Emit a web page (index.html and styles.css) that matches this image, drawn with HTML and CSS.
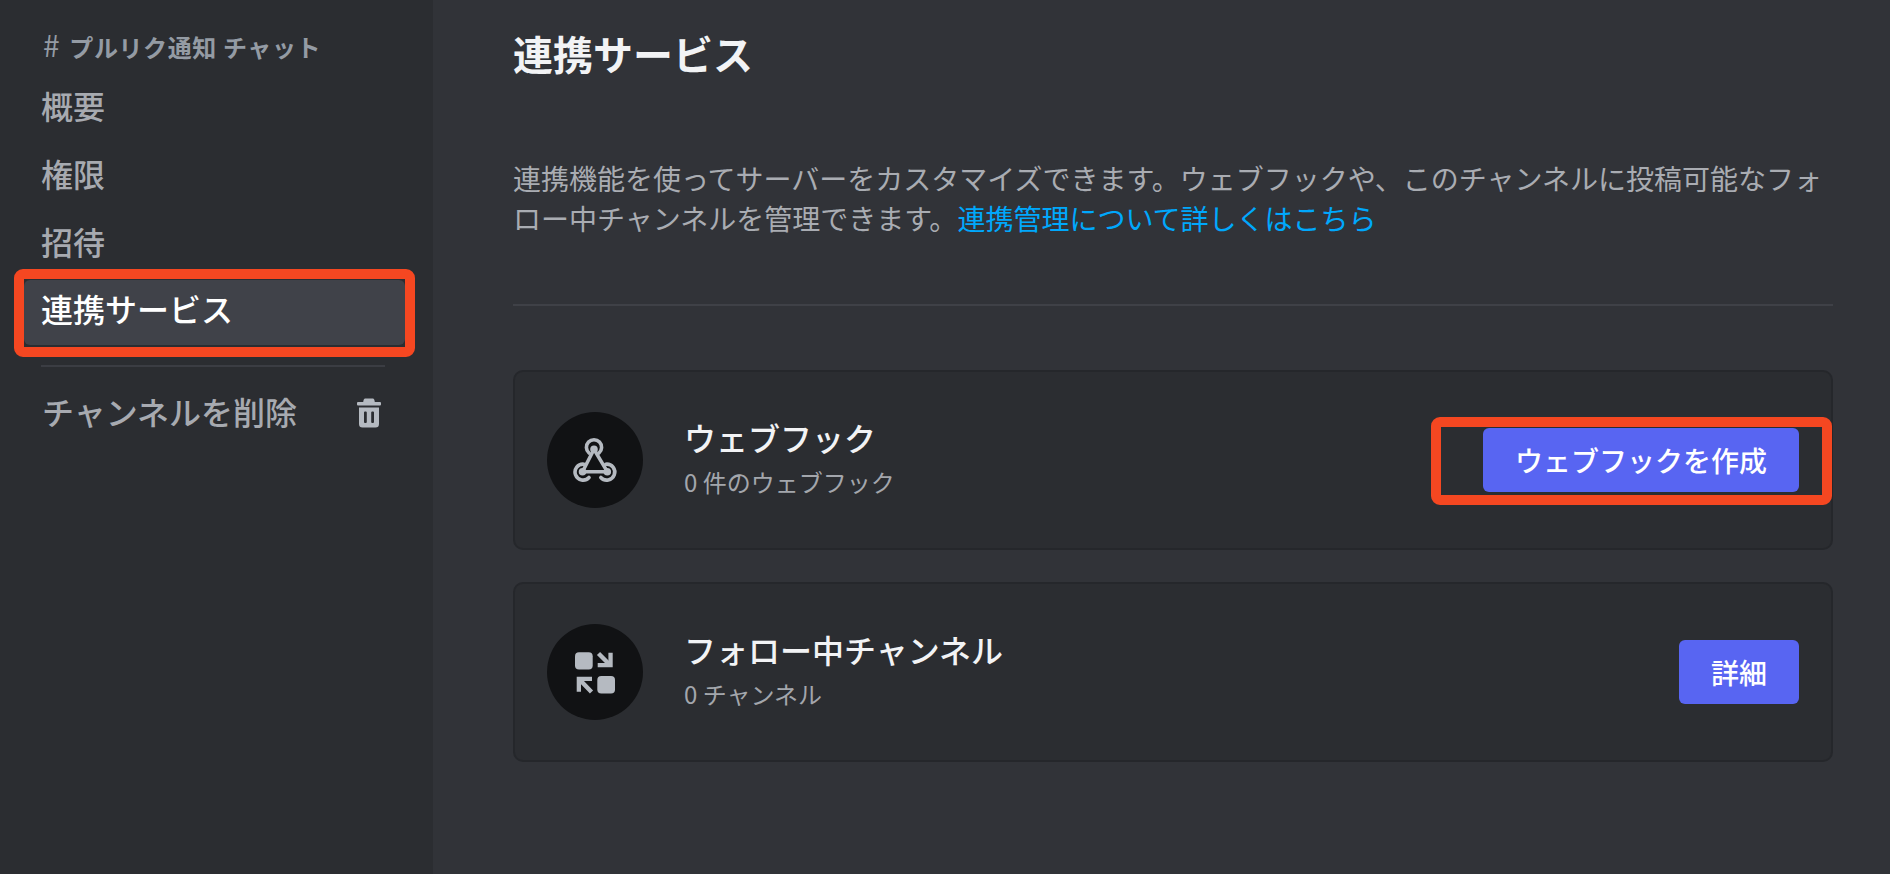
FILE: index.html
```html
<!DOCTYPE html>
<html lang="ja">
<head>
    <meta charset="UTF-8">
    <title>連携サービス</title>
    <link rel="stylesheet" href="styles.css">
</head>
<body>
    <div class="layout">
        <nav class="sidebar">
            <div class="sidebar-header"><span class="hash">#</span> プルリク通知 チャット</div>
            <div class="nav-item">概要</div>
            <div class="nav-item">権限</div>
            <div class="nav-item">招待</div>
            <div class="nav-item selected">連携サービス<span class="callout"></span></div>
            <div class="nav-separator"></div>
            <div class="nav-item delete-item">
                チャンネルを削除
                <svg class="trash-icon" width="24" height="30" viewBox="0 0 24 30">
                    <path d="M8.5 0.5h7c1 0 1.7 0.7 1.9 1.6L17.8 4H23a1 1 0 0 1 1 1v1.5a1 1 0 0 1-1 1H1a1 1 0 0 1-1-1V5a1 1 0 0 1 1-1h5.2l0.4-1.9C6.8 1.2 7.5 0.5 8.5 0.5z" fill="currentColor"/>
                    <path fill-rule="evenodd" d="M2 9.5h20v16.500a3.500 3.500 0 0 1-3.500 3.500h-13A3.500 3.500 0 0 1 2 26zM8 13.500a1 1 0 0 0-1 1v9.500a1 1 0 0 0 1 1h0.800a1 1 0 0 0 1-1v-9.500a1 1 0 0 0-1-1zM15.200 13.500a1 1 0 0 0-1 1v9.500a1 1 0 0 0 1 1h0.800a1 1 0 0 0 1-1v-9.500a1 1 0 0 0-1-1z" fill="currentColor"/>
                </svg>
            </div>
        </nav>

        <main class="content">
            <h1 class="page-title">連携サービス</h1>
            <p class="description">連携機能を使ってサーバーをカスタマイズできます。ウェブフックや、このチャンネルに投稿可能なフォロー中チャンネルを管理できます。<a class="link" href="#">連携管理について詳しくはこちら</a></p>
            <div class="divider"></div>

            <div class="card">
                <div class="card-icon">
                    <svg width="46" height="46" viewBox="-1 -1 46 46" fill="none" stroke="currentColor" stroke-width="3.6" stroke-linecap="round">
                        <path d="M16 15a7.600 7.600 0 1 1 10 0"/>
                        <path d="M11 26.200a8 8 0 1 0 5 13.300"/>
                        <path d="M32.800 26.200a8 8 0 1 1-5 13.300"/>
                        <path d="M21 11.300L9.500 33.700H34.300L21 11.300" stroke-linejoin="round"/>
                        <circle cx="21" cy="11.300" r="2" fill="currentColor"/>
                        <circle cx="9.500" cy="33.700" r="2" fill="currentColor"/>
                        <circle cx="34.300" cy="33.700" r="2" fill="currentColor"/>
                    </svg>
                </div>
                <div class="card-text">
                    <div class="card-title">ウェブフック</div>
                    <div class="card-sub">0 件のウェブフック</div>
                </div>
                <button class="btn">ウェブフックを作成</button>
                <span class="callout callout-btn"></span>
            </div>

            <div class="card">
                <div class="card-icon">
                    <svg width="44" height="44" viewBox="0 0 44 44" fill="currentColor">
                        <rect x="2" y="2.300" width="17.700" height="17.200" rx="4"/>
                        <rect x="24.300" y="26" width="17.700" height="17.500" rx="4"/>
                        <path d="M39.700 2.700V17.300H24.700V13H35.400V2.700Z"/>
                        <path d="M3.700 41.700V26.700H19V31H8V41.700Z"/>
                        <path d="M25.500 3.500L36 14M18.500 42L7 30" stroke="currentColor" stroke-width="4.400"/>
                    </svg>
                </div>
                <div class="card-text">
                    <div class="card-title">フォロー中チャンネル</div>
                    <div class="card-sub">0 チャンネル</div>
                </div>
                <button class="btn">詳細</button>
            </div>
        </main>
    </div>
</body>
</html>
```

FILE: styles.css
```css
* {
    margin: 0;
    padding: 0;
    box-sizing: border-box;
}

html,
body {
    height: 100%;
    overflow: hidden;
}

body {
    background-color: #313338;
    font-family: "Noto Sans CJK JP", "Noto Sans", sans-serif;
    color: #fff;
}

.layout {
    display: flex;
    height: 100%;
}

/* サイドバー */
.sidebar {
    flex: 0 0 433px;
    background-color: #2b2d31;
    padding: 29px 28px 0 24px;
}

.sidebar-header {
    height: 30px;
    margin-bottom: 16px;
    padding-left: 19px;
    font-size: 24px;
    font-weight: 700;
    line-height: 30px;
    letter-spacing: 0.6px;
    white-space: nowrap;
    color: #949ba4;
}

.hash {
    margin-right: 3px;
    font-size: 30px;
    font-weight: 400;
    line-height: 1;
}

.nav-item {
    position: relative;
    display: flex;
    align-items: center;
    height: 65px;
    margin-bottom: 3px;
    padding: 0 24px 6px 17px;
    font-size: 32px;
    font-weight: 500;
    color: #a7aab0;
}

.nav-item.selected {
    margin-top: 4px;
    margin-bottom: 0;
    padding-bottom: 9px;
    background-color: #404249;
    border-radius: 6px;
    color: #fff;
}

.callout {
    position: absolute;
    border: 10px solid #f54721;
    border-radius: 9px;
}

.selected .callout {
    top: -11px;
    bottom: -12px;
    left: -10px;
    right: -10px;
}

.nav-separator {
    height: 2px;
    margin: 20px 20px 13px 17px;
    background-color: #3b3d43;
}

.nav-item.delete-item {
    justify-content: space-between;
    padding-left: 18px;
    padding-bottom: 4px;
}

.trash-icon {
    color: #b5bac1;
    margin-top: 4px;
}

/* メイン */
.content {
    flex: 1;
    padding: 29px 57px 0 80px;
}

.page-title {
    font-size: 40px;
    font-weight: 700;
    line-height: 48px;
    color: #f2f3f5;
}

.description {
    margin-top: 81px;
    font-size: 28px;
    line-height: 40px;
    color: #a9acb2;
}

.link {
    color: #00a8fc;
    text-decoration: none;
}

.divider {
    height: 2px;
    margin-top: 66px;
    background-color: #3f4147;
}

.card {
    position: relative;
    display: flex;
    align-items: center;
    height: 180px;
    margin-top: 32px;
    padding: 0 32px;
    background-color: #2b2d31;
    border: 2px solid #25272b;
    border-radius: 10px;
}

.divider + .card {
    margin-top: 64px;
}

.card-icon {
    display: flex;
    align-items: center;
    justify-content: center;
    flex: 0 0 96px;
    height: 96px;
    margin-right: 41px;
    background-color: #111214;
    border-radius: 50%;
    color: #b5bac1;
}

.card-text {
    flex: 1;
    padding-bottom: 7px;
}

.card-title {
    margin-bottom: 7px;
    font-size: 32px;
    font-weight: 500;
    line-height: 44px;
    color: #f2f3f5;
}

.card-sub {
    font-size: 24px;
    line-height: 32px;
    color: #a3a6ac;
}

.btn {
    height: 64px;
    padding: 0 32px;
    background-color: #5865f2;
    border: none;
    border-radius: 6px;
    font-family: inherit;
    font-size: 28px;
    font-weight: 500;
    color: #fff;
}

.callout-btn {
    top: 45px;
    right: -1px;
    width: 401px;
    height: 88px;
}
```
